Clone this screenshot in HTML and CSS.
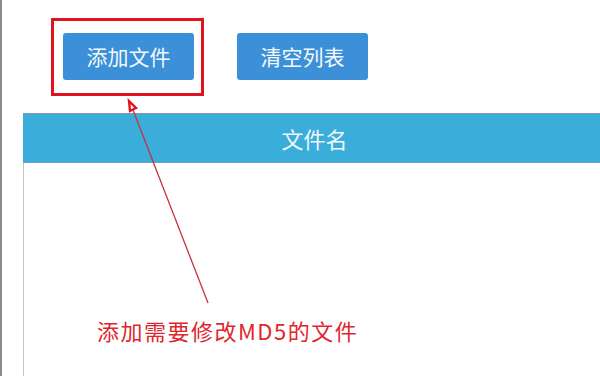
FILE: index.html
```html
<!DOCTYPE html>
<html lang="zh-CN">
<head>
<meta charset="utf-8">
<link rel="stylesheet" href="styles.css">
</head>
<body>
<div class="frame">
  <div class="toolbar">
    <button class="btn">添加文件</button>
    <button class="btn">清空列表</button>
  </div>
  <div class="table">
    <div class="thead">文件名</div>
    <div class="tbody"></div>
  </div>
  <div class="highlight"></div>
  <svg class="arrow" width="600" height="376" viewBox="0 0 600 376">
    <line x1="208" y1="303" x2="133" y2="110" stroke="#c8323a" stroke-width="1.3"/>
    <polygon points="129,101 136,108 130,111" fill="none" stroke="#e4141c" stroke-width="2.4" stroke-linejoin="miter"/>
  </svg>
  <div class="note">添加需要修改MD5的文件</div>
</div>
</body>
</html>
```
FILE: styles.css
```css
html, body {
  margin: 0;
  padding: 0;
  background: #fff;
}
body {
  width: 600px;
  height: 376px;
  overflow: hidden;
  font-family: "Noto Sans CJK SC", "Noto Sans", sans-serif;
}
.frame {
  position: relative;
  width: 598px;
  height: 376px;
  border-left: 2px solid #8c8c8c;
}
.toolbar {
  display: flex;
  gap: 43px;
  padding: 33px 0 0 61px;
  height: 47px;
}
.btn {
  width: 131px;
  height: 47px;
  border: none;
  border-radius: 3px;
  background: #3b90d8;
  color: #f4f8fc;
  font-family: inherit;
  font-size: 21px;
  line-height: 47px;
  padding: 0;
}
.table {
  margin: 33px 0 0 21px;
  height: 263px;
  display: flex;
  flex-direction: column;
}
.thead {
  height: 48px;
  background: #3badda;
  border-top: 1px solid #7f9aa6;
  border-bottom: 1px solid #6fa3bd;
  color: #f2f8fb;
  font-size: 22px;
  line-height: 48px;
  text-align: center;
  padding-left: 6px;
}
.tbody {
  flex: 1;
  border-left: 1px solid #c4c4c4;
}
.highlight {
  position: absolute;
  left: 49px;
  top: 18px;
  width: 147px;
  height: 72px;
  border: 3px solid #e0141c;
}
.arrow {
  position: absolute;
  left: -2px;
  top: 0;
}
.note {
  position: absolute;
  left: 95px;
  top: 316px;
  color: #e0262d;
  font-size: 22px;
  letter-spacing: 1.5px;
  line-height: 28px;
  white-space: nowrap;
}
```
